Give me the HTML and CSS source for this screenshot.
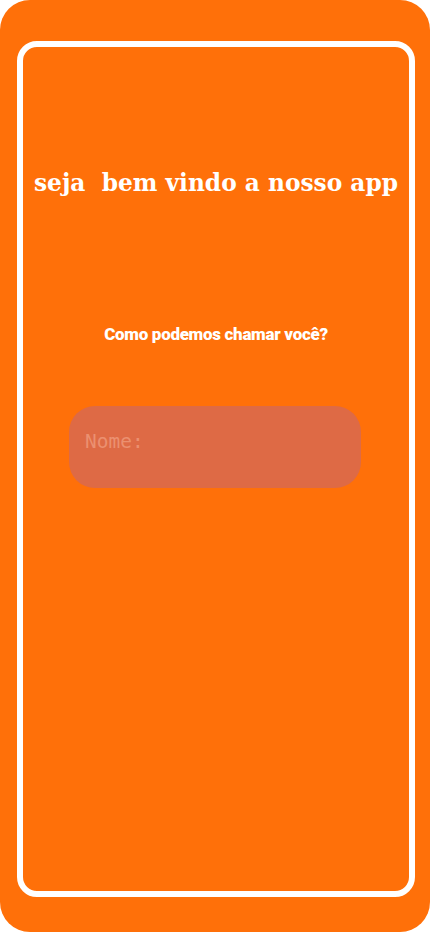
FILE: index.html
```html
<!DOCTYPE html>
<html lang="pt">
<head>
<meta charset="utf-8">
<title>Bem vindo</title>
<link rel="stylesheet" href="styles.css">
</head>
<body>
<div class="app">
  <div class="frame">
    <h1 class="title">seja  bem vindo a nosso app</h1>
    <p class="question">Como podemos chamar você?</p>
    <input class="name-input" type="text" placeholder="Nome:">
  </div>
</div>
</body>
</html>
```
FILE: styles.css
```css
html, body {
  margin: 0;
  padding: 0;
  background: #ffffff;
}
.app {
  width: 430px;
  height: 932px;
  background: #ff7009;
  border-radius: 30px;
  box-sizing: border-box;
  padding: 41px 15px 35px 17px;
}
.frame {
  height: 100%;
  box-sizing: border-box;
  border: 6px solid #ffffff;
  border-radius: 20px;
  display: flex;
  flex-direction: column;
  align-items: center;
  padding-top: 121px;
}
.title {
  margin: 0;
  font-family: "DejaVu Serif", serif;
  font-weight: bold;
  font-size: 23.3px;
  line-height: 30px;
  color: #ffffff;
  white-space: pre;
}
.question {
  margin: 125px 0 0;
  font-family: Roboto, "Noto Sans", sans-serif;
  font-weight: 900;
  font-size: 17px;
  line-height: 22px;
  letter-spacing: -0.3px;
  color: #ffffff;
}
.name-input {
  margin-top: 61px;
  margin-left: -2px;
  width: 292px;
  height: 82px;
  box-sizing: border-box;
  border: none;
  border-radius: 26px;
  background: #de6a45;
  padding: 0 16px 12px;
  font-family: "DejaVu Sans Mono", monospace;
  font-size: 19.5px;
  color: #ffffff;
  outline: none;
}
.name-input::placeholder {
  color: #eb9070;
}
```
